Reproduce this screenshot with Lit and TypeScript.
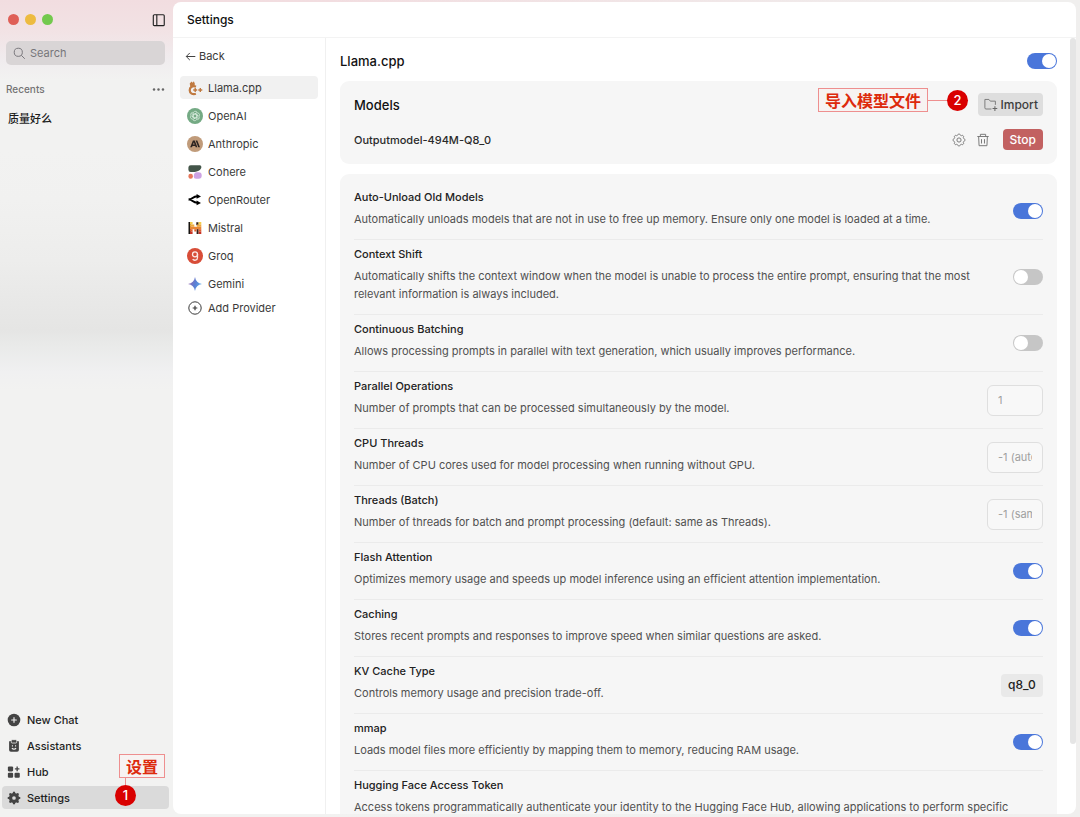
import { LitElement, html, css, svg, nothing } from "lit";
import { customElement } from "lit/decorators.js";
import { classMap } from "lit/directives/class-map.js";

type Setting = {
  id: string;
  title: string;
  text: string;
  kind: "switch" | "input" | "select" | "none";
  on?: boolean;
  value?: string;
};

const SETTINGS: Setting[] = [
  { id: "unload", title: "Auto-Unload Old Models", text: "Automatically unloads models that are not in use to free up memory. Ensure only one model is loaded at a time.", kind: "switch", on: true },
  { id: "shift", title: "Context Shift", text: "Automatically shifts the context window when the model is unable to process the entire prompt, ensuring that the most relevant information is always included.", kind: "switch" },
  { id: "batching", title: "Continuous Batching", text: "Allows processing prompts in parallel with text generation, which usually improves performance.", kind: "switch" },
  { id: "parallel", title: "Parallel Operations", text: "Number of prompts that can be processed simultaneously by the model.", kind: "input", value: "1" },
  { id: "threads", title: "CPU Threads", text: "Number of CPU cores used for model processing when running without GPU.", kind: "input", value: "-1 (auto-detect)" },
  { id: "batch", title: "Threads (Batch)", text: "Number of threads for batch and prompt processing (default: same as Threads).", kind: "input", value: "-1 (same as Threads)" },
  { id: "flash", title: "Flash Attention", text: "Optimizes memory usage and speeds up model inference using an efficient attention implementation.", kind: "switch", on: true },
  { id: "caching", title: "Caching", text: "Stores recent prompts and responses to improve speed when similar questions are asked.", kind: "switch", on: true },
  { id: "kv", title: "KV Cache Type", text: "Controls memory usage and precision trade-off.", kind: "select", value: "q8_0" },
  { id: "mmap", title: "mmap", text: "Loads model files more efficiently by mapping them to memory, reducing RAM usage.", kind: "switch", on: true },
  { id: "token", title: "Hugging Face Access Token", text: "Access tokens programmatically authenticate your identity to the Hugging Face Hub, allowing applications to perform specific", kind: "none" },
];

const icon = (body: unknown, size = 16, box = 16) => html`<svg class="icon" width=${size} height=${size} viewBox="0 0 ${box} ${box}" fill="none" aria-hidden="true">${body}</svg>`;

// Outline of an eight-toothed wheel centred in a 16-unit box.
const wheel = (radius: number, depth: number, teeth = 8) => {
  const steps = 96;
  let d = "";
  for (let i = 0; i < steps; i++) {
    const a = (i / steps) * Math.PI * 2;
    const wave = Math.max(-1, Math.min(1, 1.5 * Math.cos(teeth * a)));
    const r = radius + depth * wave;
    d += `${i ? "L" : "M"}${(8 + r * Math.cos(a)).toFixed(2)} ${(8 + r * Math.sin(a)).toFixed(2)}`;
  }
  return d + "z";
};

const llamaLogo = svg`
  <path d="M9 6.700C5.800 5.300 2.700 7.200 2.700 10.200s3 4.800 6.200 3.600" stroke="#c07a40" stroke-width="2.200"/>
  <path d="M3.400 7 2.700 3.400l1.900-1.900 1 1.200 1.300-1.500 1 2.700-.8 2.600z" fill="#c07a40"/>
  <path d="M6.200 10h4M8.200 8v4M11.300 10h4M13.300 8v4" stroke="#c07a40" stroke-width="1.400"/>`;
const openaiLogo = svg`
  <circle cx="8" cy="8" r="8" fill="#74aa84"/>
  <g stroke="#d5eadb" stroke-width=".8">
    ${[0, 60, 120, 180, 240, 300].map((a) => svg`<path transform="rotate(${a} 8 8)" d="M6.100 9.100V5.500a2.200 2.200 0 0 1 3.900-1.400M6.100 6.900l3.200-1.900"/>`)}
  </g>`;
const anthropicLogo = svg`
  <circle cx="8" cy="8" r="8" fill="#c09b7a"/>
  <path d="M5.900 4.600h1.900l2.600 6.700H8.700l-.5-1.400H5.500L5 11.300H3.200zM6.800 6.400 6 8.600h1.700zM8.600 4.600h1.700l2.700 6.700h-1.700z" fill="#2b2421"/>`;
const cohereLogo = svg`
  <path d="M3.700 1.200h9.100a1.700 1.700 0 0 1 1.600 1.700c0 2.800-4.300 5.200-8.600 5.200H3.700A2.300 2.300 0 0 1 1.400 5.800V3.500a2.300 2.300 0 0 1 2.300-2.300z" fill="#435549"/>
  <path d="M9.700 8.300h2a3 3 0 0 1 3 3v.4a3 3 0 0 1-3 3H9a2.300 2.300 0 0 1-2.300-2.300c0-2 1-4.100 3-4.100z" fill="#cda3e3"/>
  <rect x="1.400" y="9.800" width="4.500" height="4.900" rx="2.200" fill="#e6775b"/>`;
const routerLogo = svg`
  <path d="M1.600 7.700C5 7.700 5.600 4.300 10.500 4.300M1.600 7.300c3.400 0 4 3.500 8.900 3.500" stroke="#000" stroke-width="2"/>
  <path d="m9.600 2 4.400 2.400-4.400 2.300zM9.600 8.500l4.400 2.400-4.400 2.300z" fill="#000"/>`;
const mistralLogo = svg`
  <path d="M1.500 2h2.200v12H1.500z" fill="#171310"/><path d="M9.600 7.200h2v6.800h-2zM9.300 2.200h2.300v3H9.300z" fill="#332019"/>
  <path d="M3 2h2.600v2.400H3zM11.600 2h2.700v2.400h-2.700z" fill="#f3cd4d"/>
  <path d="M3 4.400h4.300v2.400H3zM9.900 4.400h4.400v2.400H9.900z" fill="#eeaa3e"/>
  <path d="M3 6.800h11.300v2.400H3z" fill="#e98735"/>
  <path d="M3 9.200h2.600v2.400H3zM7.300 9.200h2.100v2.400H7.300zM11.600 9.200h2.700v2.400h-2.700z" fill="#dd5c2c"/>
  <path d="M3 11.600h2.600V14H3zM11.600 11.600h2.700V14h-2.700z" fill="#c93325"/>`;
const groqLogo = svg`
  <circle cx="8" cy="8" r="8" fill="#d84d38"/>
  <circle cx="8" cy="6.300" r="2.500" stroke="#fbe9e5" stroke-width="1.300"/>
  <path d="M10.500 6.100v3.400c0 3.300-3.700 3.300-4.800 1.700" stroke="#fbe9e5" stroke-width="1.300"/>`;
const geminiLogo = svg`
  <defs><linearGradient id="gem" x1="1" y1="6" x2="15" y2="10" gradientUnits="userSpaceOnUse"><stop stop-color="#9a6ab0"/><stop offset=".5" stop-color="#5a7fd4"/><stop offset="1" stop-color="#5fb0ea"/></linearGradient></defs>
  <path d="M8 1c.6 4 3 6.400 7 7-4 .6-6.400 3-7 7-.6-4-3-6.400-7-7 4-.6 6.400-3 7-7z" fill="url(#gem)"/>`;
const addCircle = svg`<circle cx="8" cy="8" r="6.200" stroke="#3a3a3a"/><path d="M8 5.700v4.600M5.700 8h4.600" stroke="#3a3a3a" stroke-width="1.200"/>`;

const PROVIDERS: [string, unknown][] = [
  ["Llama.cpp", llamaLogo],
  ["OpenAI", openaiLogo],
  ["Anthropic", anthropicLogo],
  ["Cohere", cohereLogo],
  ["OpenRouter", routerLogo],
  ["Mistral", mistralLogo],
  ["Groq", groqLogo],
  ["Gemini", geminiLogo],
];

const NAV: [string, unknown][] = [
  ["New Chat", svg`<circle cx="8" cy="8" r="7.200" fill="#444"/><path d="M8 5.300v5.400M5.300 8h5.400" stroke="#f2f2f1" stroke-width="1.300" stroke-linecap="round"/>`],
  ["Assistants", svg`<path d="M3.400 2.400h9.200a1 1 0 0 1 1 1v9.200a2 2 0 0 1-2 2H4.400a2 2 0 0 1-2-2V3.400a1 1 0 0 1 1-1z" fill="#444"/><rect x="4.800" y=".8" width="6.400" height="3.800" rx="1.200" fill="#444" stroke="#f2f2f1" stroke-width=".9"/><path d="M6.200 7v1.600M9.800 7v1.600M5.600 10.500c1.200 1.500 3.600 1.500 4.800 0" stroke="#f2f2f1" stroke-width="1.200"/>`],
  ["Hub", svg`<g fill="#444"><rect x="1" y="1.600" width="6" height="5.800" rx="1.300"/><rect x="1" y="8.800" width="6" height="5.800" rx="1.300"/><rect x="8.600" y="8.800" width="6" height="5.800" rx="1.300"/></g><path d="M11.600 1.800v5.200M9 4.400h5.200" stroke="#444" stroke-width="1.500"/>`],
  ["Settings", svg`<path d=${wheel(6.5, 0.8)} fill="#444"/><circle cx="8" cy="8" r="2.100" fill="#dadada"/>`],
];

@customElement("app-root")
export class AppRoot extends LitElement {
  static styles = css`
    :host {
      display: flex;
      height: 100vh;
      overflow: hidden;
      box-sizing: border-box;
      padding: 2px 4px 3px 0;
      background:
        linear-gradient(90deg, transparent 30%, #f0efee 95%),
        linear-gradient(180deg, #f2dde0 0, #f2e2e4 30px, #f0ecee 60px, #f2f2f1 80px, #f2f2f1 150px, #f1f1f0 200px, #ededec 260px, #e5e5e4 330px, #e9eae9 345px, #f0f0f1 372px, #f2f2f1 390px);
      font-family: Inter, "Noto Sans CJK SC", sans-serif;
      font-size: 11px;
      line-height: 18px;
      color: #3a3a3a;
    }
    *, *::before { box-sizing: border-box; }
    button, input, select { font: inherit; color: inherit; margin: 0; }
    button { border: 0; background: none; padding: 0; display: flex; align-items: center; cursor: pointer; }
    h1, h2, h3, p { margin: 0; font-size: inherit; font-weight: 500; }
    .icon { display: block; flex: none; }

    .side { width: 173px; flex: none; display: flex; flex-direction: column; }
    .bar { display: flex; align-items: center; height: 36px; padding: 0 7px 0 8px; }
    .lights { display: flex; gap: 6px; flex: 1; padding-bottom: 2px; }
    .light { width: 11px; height: 11px; border-radius: 50%; background: #df5f57; }
    .light.amber { background: #edbb40; }
    .light.green { background: #73c94d; }
    .search { display: flex; align-items: center; gap: 4px; height: 24px; margin: 3px 8px 0 6px; padding: 0 7px; border-radius: 5px; background: #d9d5d6; }
    .search input { flex: 1; min-width: 0; border: 0; padding: 0; background: none; outline: 0; }
    .search input::placeholder { color: #77757a; opacity: 1; }
    .recents { display: flex; align-items: center; justify-content: space-between; margin: 15px 8px 0 6px; font-size: 10px; font-weight: 500; color: #737373; }
    .chat { margin: 12px 8px 0; font-weight: 500; color: #1c1c1c; }
    .menu { margin-top: auto; padding: 0 4px 5px 2px; display: flex; flex-direction: column; gap: 3px; }
    .menu-row { position: relative; }
    .menu button { width: 100%; height: 23px; gap: 6px; padding: 0 5px; border-radius: 4px; font-weight: 500; color: #1f1f1f; }
    .menu .active { background: #dadada; }

    .panel { flex: 1; min-width: 0; display: flex; flex-direction: column; background: #fff; border-radius: 8px; overflow: hidden; }
    .title { height: 36px; flex: none; padding: 9px 14px; border-bottom: 1px solid #f3f3f3; font-size: 12px; font-weight: 500; color: #111; }
    .body { flex: 1; min-height: 0; display: flex; }
    .providers { width: 153px; flex: none; padding: 9px 7px; border-right: 1px solid #f0f0f0; }
    .back { gap: 3px; height: 18px; padding: 0 5px; }
    .list { display: flex; flex-direction: column; gap: 5px; margin-top: 11px; }
    .provider { width: 100%; height: 23px; gap: 5px; padding: 0 7px; border-radius: 4px; }
    .provider.active { background: #f1f1f1; }
    .add { margin-top: 1px; }

    .content { flex: 1; min-width: 0; overflow: hidden; padding: 14px 13px 14px 14px; }
    .head { display: flex; align-items: center; justify-content: space-between; height: 18px; font-size: 13px; color: #111; }
    .card { background: #f6f6f6; border-radius: 9px; padding: 0 14px; }
    .models { margin: 11px 0 10px; padding: 12px 14px; height: 83px; display: flex; flex-direction: column; gap: 12px; }
    .line { position: relative; display: flex; align-items: center; height: 23px; }
    .line h2, .line h3 { flex: 1; color: #2a2a2a; }
    .line h2 { font-size: 13px; color: #111; }
    .import { height: 23px; padding: 0 5px; gap: 2px; border-radius: 4px; background: #dedede; font-size: 12px; font-weight: 500; color: #3d3d3d; }
    .actions { display: flex; align-items: center; gap: 10px; }
    .stop { height: 21px; padding: 0 7px; margin-left: 3px; border-radius: 4px; background: #c26161; color: #fff; font-size: 12px; font-weight: 500; }

    .settings { padding-top: 9px; }
    .row { display: flex; align-items: center; justify-content: space-between; gap: 24px; min-height: 57px; border-bottom: 1px solid #ebebeb; }
    .row-text { padding: 5px 0 11px; color: #505050; }
    .row-text label { display: block; margin-bottom: 4px; font-weight: 500; color: #222; }
    .desc { font-weight: 400; }

    .switch { appearance: none; flex: none; display: block; width: 30px; height: 16px; padding: 1px; border-radius: 8px; background: #c6c6c6; cursor: pointer; }
    .switch::before { content: ""; display: block; width: 14px; height: 14px; border-radius: 50%; background: #fff; }
    .switch:checked { background: #4a76da; padding-left: 15px; }
    .field { flex: none; width: 56px; height: 31px; padding: 0 10px; border: 1px solid #dfdfdf; border-radius: 6px; background: #f8f8f8; outline: 0; }
    .field::placeholder { color: #a0a0a0; opacity: 1; }
    .select { appearance: none; flex: none; height: 23px; padding: 0 7px; border: 0; border-radius: 4px; background: #e9e9e9; font-size: 12px; font-weight: 500; color: #222; }

    .scroll { width: 6px; flex: none; display: flex; flex-direction: column; }
    .thumb { height: 91%; border-radius: 3px; background: #e5e5e5; }

    .note { position: absolute; display: flex; align-items: center; font-size: 16px; line-height: 22px; font-weight: 700; color: #dd2a0c; pointer-events: none; }
    .note-text { padding: 0 6px; border: 1px solid #ee8f8f; background: #f7f3f2; font-family: "Noto Sans CJK SC", sans-serif; }
    .wire { background: #ee8f8f; }
    .dot { width: 21px; height: 21px; flex: none; border-radius: 50%; background: #d90000; color: #fff; font-size: 13px; line-height: 21px; font-weight: 500; text-align: center; }
    .note-import { right: 75px; top: -5px; }
    .note-import .wire { width: 19px; height: 1px; }
    .note-settings { right: 4px; bottom: 3px; flex-direction: column; align-items: flex-start; }
    .note-settings .wire { width: 1px; height: 7px; margin-left: 6px; }
    .note-settings .dot { margin-left: -4px; }
  `;

  private control(s: Setting) {
    if (s.kind === "switch") return html`<input class="switch" type="checkbox" id=${s.id} .checked=${!!s.on} />`;
    if (s.kind === "input") return html`<input class="field" type="text" id=${s.id} placeholder=${s.value ?? ""} />`;
    if (s.kind === "select") return html`<select class="select" id=${s.id}><option>${s.value}</option></select>`;
    return nothing;
  }

  render() {
    return html`
      <aside class="side">
        <div class="bar">
          <div class="lights"><span class="light"></span><span class="light amber"></span><span class="light green"></span></div>
          <button aria-label="Toggle sidebar">${icon(svg`<rect x="1.500" y="2" width="12.500" height="12.500" rx="1.200" stroke="#222" stroke-width="1.300"/><path d="M5.500 2v12.500" stroke="#222" stroke-width="1.300"/>`, 14)}</button>
        </div>
        <label class="search">
          ${icon(svg`<circle cx="6.500" cy="6.500" r="5" stroke="#77757a" stroke-width="1.200"/><path d="m10.200 10.200 4.300 4.300" stroke="#77757a" stroke-width="1.200"/>`, 13)}
          <input type="text" placeholder="Search" aria-label="Search" />
        </label>
        <div class="recents">
          <h2>Recents</h2>
          <button aria-label="More">${icon(svg`<g fill="#666"><circle cx="2.500" cy="8" r="1.500"/><circle cx="8" cy="8" r="1.500"/><circle cx="13.500" cy="8" r="1.500"/></g>`, 13)}</button>
        </div>
        <button class="chat">质量好么</button>
        <nav class="menu">
          ${NAV.map(([name, art]) => html`<div class="menu-row">
            <button class=${classMap({ active: name === "Settings" })}>${icon(art, 14)}${name}</button>
            ${name === "Settings" ? html`<div class="note note-settings"><span class="note-text">设置</span><span class="wire"></span><span class="dot">1</span></div>` : nothing}
          </div>`)}
        </nav>
      </aside>
      <main class="panel">
        <h1 class="title">Settings</h1>
        <div class="body">
          <nav class="providers">
            <button class="back">${icon(svg`<path d="M15 8H2M7 2.800 1.800 8 7 13.200" stroke="#3a3a3a" stroke-width="1.400"/>`, 11)}Back</button>
            <div class="list">
              ${PROVIDERS.map(([name, art], i) => html`<button class=${classMap({ provider: true, active: i === 0 })}>${icon(art)}${name}</button>`)}
            </div>
            <button class="provider add">${icon(addCircle)}Add Provider</button>
          </nav>
          <section class="content">
            <div class="head"><h2><label for="engine">Llama.cpp</label></h2><input class="switch" type="checkbox" id="engine" .checked=${true} /></div>
            <div class="card models">
              <div class="line">
                <h2>Models</h2>
                <button class="import">${icon(svg`<path d="M9 12.800H3.200A1.200 1.200 0 0 1 2 11.600V2.600h4.300l1.500 1.800h5.400v4" stroke="#777"/><path d="M12.700 9.800v5M10.200 12.300h5" stroke="#666" stroke-width="1.100"/>`, 15)}Import</button>
                <div class="note note-import"><span class="note-text">导入模型文件</span><span class="wire"></span><span class="dot">2</span></div>
              </div>
              <div class="line">
                <h3>Outputmodel-494M-Q8_0</h3>
                <div class="actions">
                  <button aria-label="Model settings">${icon(svg`<path d=${wheel(6.2, 0.6)} stroke="#777" stroke-width="1.100" stroke-linejoin="round"/><circle cx="8" cy="8" r="2.400" stroke="#777" stroke-width="1.100"/>`, 14)}</button>
                  <button aria-label="Delete model">${icon(svg`<path d="M1.500 4h13M5 4V1.500h6V4M3 4l.5 10.500h9L13 4M6.300 7v5M9.700 7v5" stroke="#777" stroke-width="1.100" stroke-linejoin="round"/>`, 14)}</button>
                  <button class="stop">Stop</button>
                </div>
              </div>
            </div>
            <div class="card settings">
              ${SETTINGS.map((s) => html`<div class="row">
                <div class="row-text"><label for=${s.kind === "none" ? nothing : s.id}>${s.title}</label><p class="desc">${s.text}</p></div>
                ${this.control(s)}
              </div>`)}
            </div>
          </section>
          <div class="scroll"><div class="thumb"></div></div>
        </div>
      </main>
    `;
  }
}
